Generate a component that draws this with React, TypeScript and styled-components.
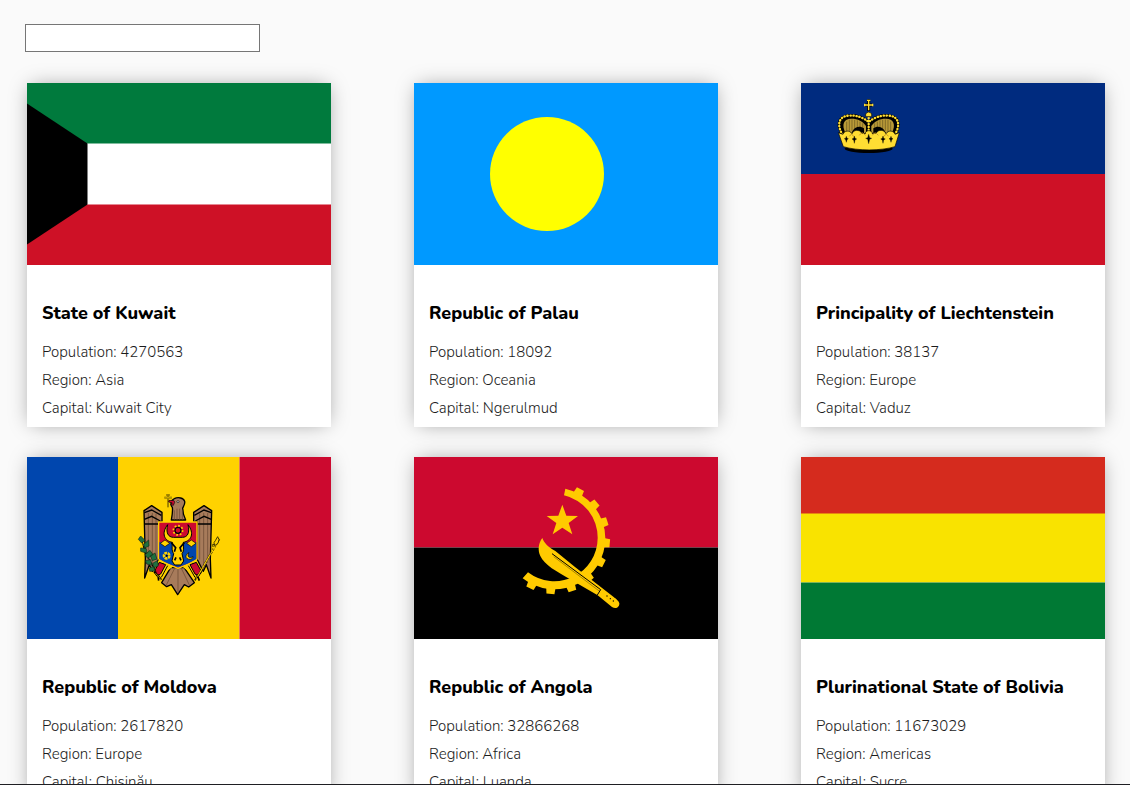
import React from "react";
import styled, { createGlobalStyle } from "styled-components";

const GlobalStyle = createGlobalStyle`
  *, *::before, *::after { box-sizing: border-box; }
  body {
    margin: 0;
    background: #fafafa;
    color: #000;
    font-family: Nunito, "Nunito Sans", "Open Sans", "Noto Sans", sans-serif;
  }
`;

const Page = styled.main`
  height: 100vh;
  padding: 24px 25px 0;
  overflow-y: auto;
  scrollbar-width: none;
  border-bottom: 1px solid #1f1f23;
`;

const SearchInput = styled.input`
  display: block;
  width: 235px;
  height: 28px;
  padding: 1px 8px;
  border: 1px solid #767676;
  background: #fff;
  font: inherit;
  font-size: 15px;
`;

const CountryGrid = styled.section`
  display: grid;
  grid-template-columns: repeat(auto-fill, 304px);
  justify-content: space-between;
  row-gap: 30px;
  padding: 31px 0 30px 2px;
`;

const Card = styled.article`
  background: #fff;
  box-shadow: 0 0 20px -4px rgba(0, 0, 0, 0.4);
`;

const FlagImage = styled.svg`
  display: block;
  width: 100%;
  height: auto;
`;

const CardBody = styled.div`
  padding: 36px 15px 5px;
`;

const CountryName = styled.h2`
  margin: 0 0 13px;
  font-size: 18px;
  font-weight: 800;
  line-height: 24px;
  white-space: nowrap;
`;

const Fact = styled.p`
  margin: 0;
  color: #1c1c1c;
  font-size: 15px;
  font-weight: 300;
  line-height: 28px;
`;

function Kuwait() {
  return (
    <>
      <path fill="#fff" d="M0 0h304v182H0z" />
      <path fill="#007a3d" d="M0 0h304v60.500H0z" />
      <path fill="#ce1126" d="M0 121.500h304V182H0z" />
      <path fill="#000" d="M0 20.500 60.500 60.500v61L0 161.500z" />
    </>
  );
}

function Palau() {
  return (
    <>
      <path fill="#0099ff" d="M0 0h304v182H0z" />
      <circle cx="133" cy="91" r="57" fill="#ff0" />
    </>
  );
}

function Liechtenstein() {
  return (
    <>
      <path fill="#002b7f" d="M0 0h304v91H0z" />
      <path fill="#ce1126" d="M0 91h304v91H0z" />
      <g transform="translate(19 7) scale(.33333)">
        <ellipse cx="146" cy="176" rx="72" ry="13" fill="#000" />
        <path d="M70 138C52 110 55 80 84 77c26-3 48 8 62 22 14-14 36-25 62-22 29 3 32 33 14 61z" fill="#000" />
        <path d="M76 128c-12-24-5-42 18-42 20 0 35 8 44 22v22z" fill="#b99a38" />
        <path d="M216 128c12-24 5-42-18-42-20 0-35 8-44 22v22z" fill="#b99a38" />
        <path d="M80 95v32M88 89v36M96 88v34M104 89v30M112 91v28M120 95v24M128 100v22M164 100v22M172 95v24M180 91v28M188 89v30M196 88v34M204 89v36M212 95v32" stroke="#65541f" strokeWidth="2" />
        <path d="M98 122c8-14 24-15 34-7v14H94zM194 122c-8-14-24-15-34-7v14h38z" fill="#000" />
        <path d="M68 134C50 107 55 79 85 77c25-2 44 6 57 16M224 134c18-27 13-55-17-57-25-2-44 6-57 16" fill="none" stroke="#000" strokeWidth="9" />
        <path d="M68 134C50 107 55 79 85 77c25-2 44 6 57 16M224 134c18-27 13-55-17-57-25-2-44 6-57 16M146 84v42" fill="none" stroke="#fd3" strokeWidth="7" strokeLinecap="round" strokeDasharray="1 8" />
        <path d="M137 72q9-12 18 0v8h-18z" fill="#fd3" stroke="#000" strokeWidth="2" />
        <path d="M146 28v35M134 45h24" stroke="#000" strokeWidth="9" />
        <path d="M146 29v32M134 45h24M141 31h10M134 41v8M158 41v8" stroke="#fd3" strokeWidth="4" />
        <path d="M55 128l14 5c4-12 20-13 27-2 5-12 22-14 30-1l10 1c0-12 21-12 21 0l11-1c7-13 25-11 30 1 7-11 23-10 27 2l13-5-13 42c-43 13-112 13-155 0z" fill="#fd3" stroke="#000" strokeWidth="2" />
        <path d="M88 139q8-12 12 0M118 136q9-14 18 0M157 136q8-14 18 0M192 139q7-12 13 0" fill="none" stroke="#c79b25" strokeWidth="3" />
        <path d="m79 139 2 6 4 1-4 3-2 8-2-8-4-3 4-1zM103 138l2 7 5 2-5 3-2 10-2-10-5-3 5-2zM146 133l3 10 6 2-6 3-3 13-3-13-6-3 6-2zM189 138l2 7 5 2-5 3-2 10-2-10-5-3 5-2zM213 139l2 6 4 1-4 3-2 8-2-8-4-3 4-1z" fill="#000" stroke="#000" strokeWidth="1" />
      </g>
    </>
  );
}

function Moldova() {
  return (
    <>
      <path fill="#0046ae" d="M0 0h91v182H0z" />
      <path fill="#ffd200" d="M91 0h121.500v182H91z" />
      <path fill="#cc092f" d="M212.500 0H304v182h-91.500z" />
      <g transform="translate(93 23) scale(.33333)">
        <g stroke="#000" strokeWidth="4" strokeLinejoin="round">
          <path d="M154 120c3-17 5-27 3-38-7-5-5-22 6-26 12-6 28-2 31 8 2 8-3 14-6 20 0 11 2 22 9 36z" fill="#a77b5b" />
          <path d="m72 92 23-15 31 20v28h-10v112l-19 37-9-20-14 40 2-58z" fill="#a77b5b" />
          <path d="m275 92-23-15-31 20v28h10v112l19 37 9-20 14 40-2-58z" fill="#a77b5b" />
          <path d="m152 263-27 45 15 12 14-6 19 30 20-30 13 7 17-13-31-46z" fill="#a77b5b" />
        </g>
        <path d="M163 91v29M171 86v34M179 86v34M187 91v29M85 99v150M97 99v167M108 101v138M239 101v138M251 99v167M263 99v150M164 265l-25 50M174 264v76M184 265l24 50" fill="none" stroke="#65452f" strokeWidth="2" />
        <path d="M73 98l22-8 29 16M73 118l22-9 26 14M73 132h43M274 98l-22-8-29 16M274 118l-22-9-26 14M274 132h-43" fill="none" stroke="#000" strokeWidth="4" />
        <path d="m117 240-14 35 17 12 37-25zM230 240l13 35-18 12-36-25z" fill="#ffd200" />
        <path d="M129 249l-10 34M143 257l-19 35M219 249l9 34M205 257l20 35" stroke="#000" strokeWidth="3" />
        <path d="m118 247-15 27 7 14 12-6 15-28zM229 247l15 27-7 14-12-6-15-28z" fill="#cc092f" stroke="#000" strokeWidth="3" />
        <path d="m102 276 12 10 10 13M114 286l2 16M244 276l-12 10-7 15M232 286l6 16" fill="none" stroke="#000" strokeWidth="5" />
        <path d="m106 280 11 10 5 10M238 280l-8 10-2 9" fill="none" stroke="#ffd200" strokeWidth="2" />
        <path d="M116 126h115v111c-18 14-38 19-57 28-20-10-39-14-58-28z" fill="#cc092f" stroke="#ffd200" strokeWidth="4" />
        <path d="M118 187h111v50c-17 12-37 17-55 25-18-8-38-13-56-25z" fill="#0046ae" />
        <path d="m121 190 14-10 14 10-14 10zM200 190l14-10 14 10-14 10z" fill="#ffd200" stroke="#000" strokeWidth="2" />
        <path d="M143 134c-20 26-10 49 14 53-1 16-2 28 4 34l-5 22 8 12h19l8-12-5-22c6-6 5-18 4-34 24-4 34-27 14-53 6 24-1 38-17 38h-26c-17 0-24-14-18-38z" fill="#ffd200" stroke="#000" strokeWidth="3" />
        <path d="m154 188 13 15-4 12M193 188l-13 15 4 12M164 241l4-9M183 241l-4-9" fill="none" stroke="#000" strokeWidth="5" />
        <circle cx="174" cy="151" r="13" fill="none" stroke="#ffd200" strokeWidth="7" strokeDasharray="5 5" />
        <circle cx="174" cy="151" r="9" fill="#cc092f" stroke="#000" strokeWidth="4" />
        <circle cx="140" cy="227" r="8" fill="none" stroke="#ffd200" strokeWidth="8" strokeDasharray="8 2" />
        <circle cx="140" cy="227" r="3" fill="#000" />
        <path d="M207 218c-12 5-13 20 3 20 5 0 9-4 9-8-12 7-19-2-12-12z" fill="#ffd200" stroke="#000" strokeWidth="2" />
        <path d="M144 43v39M133 53h23M139 45h10" stroke="#5c4c00" strokeWidth="5" />
        <path d="M144 43v39M133 53h23" stroke="#ffd200" strokeWidth="2" />
        <path d="m162 62-15-1-1 5 11 3-5 5 8 2 4-9z" fill="#cc092f" stroke="#000" strokeWidth="2" />
        <circle cx="174" cy="65" r="3" fill="#fff" stroke="#000" strokeWidth="2" />
        <path d="M65 174c5 22 5 38 21 61l23 43" fill="none" stroke="#000" strokeWidth="3" />
        <path d="m62 168 13 13-10 8-10-11zM71 193l15-13 1 18-13 6zM62 204l17 2 2 14-19-6zM75 224l15-13 9 13-16 11zM91 227l14-8 6 18-14 5zM76 242l16-3 4 17-16-4zM98 250l14-8 3 15-13 7zM88 264l13-5 4 14-16 1z" fill="#20703f" stroke="#132d19" strokeWidth="2" />
        <path d="m298 176-65 113" stroke="#403600" strokeWidth="6" strokeDasharray="8 3" />
        <path d="m298 176-65 113" stroke="#ffd200" strokeWidth="3" />
        <path d="m286 182 7-12 4 9-3 11-10 7-2-9zM279 201l-1-8 6 1" fill="#ffd200" stroke="#403600" strokeWidth="3" />
      </g>
    </>
  );
}

const gearTeeth = [-62, -40, -18, 5, 27, 49, 71, 94, 116];

function Angola() {
  return (
    <>
      <path fill="#cc092f" d="M0 0h304v90.500H0z" />
      <path fill="#000" d="M0 90.500h304V182H0z" />
      <g transform="translate(87 13) scale(.33333)" fill="#ffcb00">
        <path d="M189 76 193 56A153 153 0 0 1 313 205A153 153 0 0 1 65 325L81 307A130 130 0 0 0 290 205A130 130 0 0 0 189 76z" />
        {gearTeeth.map((angle) => (
          <path key={angle} transform={`translate(160 205) rotate(${angle})`} d="M148-14 167-12v24l-19 2z" />
        ))}
        <path d="m184 104 12 33 35 1-28 21 11 34-30-20-29 20 11-34-29-21 35-1z" />
        <path d="M124 204C112 220 110 240 118 258C130 285 168 305 206 327L290 376L333 411C345 419 356 411 355 400C354 393 344 386 338 381L222 291L163 243C141 230 130 220 124 204z" />
        <path d="m153 251 146 108-10 16" fill="none" stroke="#000" strokeWidth="3" />
        <path d="m158 260 138 104" fill="none" stroke="#000" strokeWidth="1" />
        <g fill="#000">
          <circle cx="318" cy="378" r="2" />
          <circle cx="328" cy="386" r="2" />
          <circle cx="337" cy="393" r="2" />
        </g>
      </g>
    </>
  );
}

function Bolivia() {
  return (
    <>
      <path fill="#d52b1e" d="M0 0h304v57H0z" />
      <path fill="#f9e300" d="M0 56.500h304v69H0z" />
      <path fill="#007934" d="M0 125.500h304V182H0z" />
    </>
  );
}

const countries = [
  { name: "State of Kuwait", population: 4270563, region: "Asia", capital: "Kuwait City", Flag: Kuwait },
  { name: "Republic of Palau", population: 18092, region: "Oceania", capital: "Ngerulmud", Flag: Palau },
  { name: "Principality of Liechtenstein", population: 38137, region: "Europe", capital: "Vaduz", Flag: Liechtenstein },
  { name: "Republic of Moldova", population: 2617820, region: "Europe", capital: "Chișinău", Flag: Moldova },
  { name: "Republic of Angola", population: 32866268, region: "Africa", capital: "Luanda", Flag: Angola },
  { name: "Plurinational State of Bolivia", population: 11673029, region: "Americas", capital: "Sucre", Flag: Bolivia },
];

export default function App() {
  return (
    <>
      <GlobalStyle />
      <Page>
        <SearchInput type="text" aria-label="Search for a country" />
        <CountryGrid>
          {countries.map(({ name, population, region, capital, Flag }) => (
            <Card key={name}>
              <FlagImage viewBox="0 0 304 182" role="img" aria-label={`Flag of ${name}`}>
                <Flag />
              </FlagImage>
              <CardBody>
                <CountryName>{name}</CountryName>
                <Fact>Population: {population}</Fact>
                <Fact>Region: {region}</Fact>
                <Fact>Capital: {capital}</Fact>
              </CardBody>
            </Card>
          ))}
        </CountryGrid>
      </Page>
    </>
  );
}
